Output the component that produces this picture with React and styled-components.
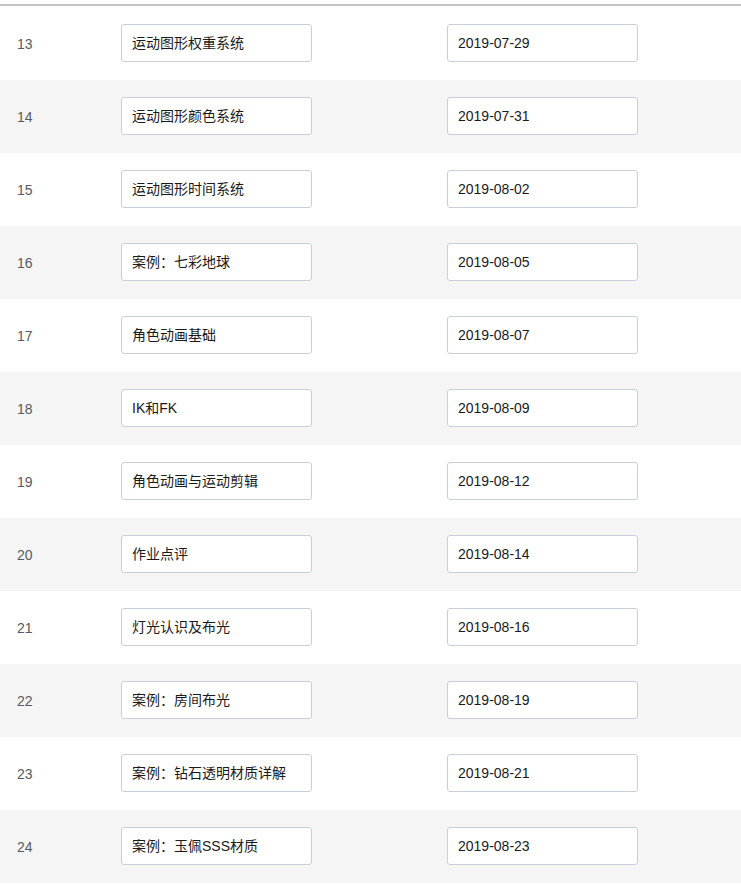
import React from "react";
import styled, { createGlobalStyle } from "styled-components";

const Global = createGlobalStyle`
  html, body { margin: 0; padding: 0; background: #fff; }
  body { font-family: "Liberation Sans", Arial, "Noto Sans CJK SC", sans-serif; }
`;

const Wrap = styled.div`
  padding-top: 4px;
`;

const Table = styled.div`
  border-top: 2px solid #c4c4c4;
  padding-top: 1px;
`;

const Row = styled.div`
  display: grid;
  grid-template-columns: 121px 326px 1fr;
  align-items: start;
  height: 73px;
  box-sizing: border-box;
  padding-top: 17px;
  background: ${(p) => (p.$alt ? "#f5f5f5" : "#fff")};
`;

const Num = styled.div`
  padding-left: 17px;
  padding-top: 1px;
  height: 38px;
  line-height: 38px;
  font-size: 14px;
  color: #555a62;
`;

const Field = styled.div`
  width: 191px;
  height: 38px;
  box-sizing: border-box;
  border: 1px solid #c9cfda;
  border-radius: 3px;
  background: #fff;
  padding: 0 10px;
  line-height: 36px;
  font-size: 14px;
  color: #1a1a1a;
  white-space: nowrap;
  overflow: hidden;
`;

const rows = [
  [13, "运动图形权重系统", "2019-07-29"],
  [14, "运动图形颜色系统", "2019-07-31"],
  [15, "运动图形时间系统", "2019-08-02"],
  [16, "案例：七彩地球", "2019-08-05"],
  [17, "角色动画基础", "2019-08-07"],
  [18, "IK和FK", "2019-08-09"],
  [19, "角色动画与运动剪辑", "2019-08-12"],
  [20, "作业点评", "2019-08-14"],
  [21, "灯光认识及布光", "2019-08-16"],
  [22, "案例：房间布光", "2019-08-19"],
  [23, "案例：钻石透明材质详解", "2019-08-21"],
  [24, "案例：玉佩SSS材质", "2019-08-23"],
];

export default function App() {
  return (
    <Wrap>
      <Global />
      <Table>
        {rows.map(([n, t, d], i) => (
          <Row key={n} $alt={i % 2 === 1}>
            <Num>{n}</Num>
            <Field>{t}</Field>
            <Field>{d}</Field>
          </Row>
        ))}
      </Table>
    </Wrap>
  );
}
